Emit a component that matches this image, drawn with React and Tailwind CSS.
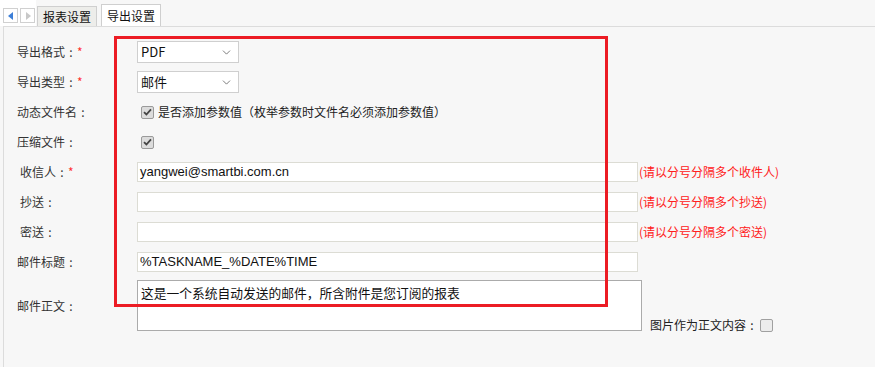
import React from 'react';
import { ChevronDown } from 'lucide-react';

const font = { fontFamily: '"Noto Sans CJK SC", "Liberation Sans", sans-serif' };

const Check = ({ checked }) => (
  <span
    className={`flex h-[13px] w-[13px] items-center justify-center rounded-[2px] border ${
      checked ? 'border-[#9a9a9a] bg-[#dcdcdc]' : 'border-[#a0a0a0] bg-[#ececec]'
    }`}
  >
    {checked && (
      <svg width="9" height="8" viewBox="0 0 9 8">
        <path d="M1 4.2 L3.4 6.5 L8 1.3" fill="none" stroke="#444" strokeWidth="1.8" />
      </svg>
    )}
  </span>
);

const Colon = () => <span className="inline-block w-[12px] text-center">:</span>;

const Label = ({ text, required, indent }) => (
  <div className={`flex w-[120px] shrink-0 items-center text-[12px] text-[#333] ${indent ? 'pl-[3px]' : ''}`}>
    <span>{text}</span>
    <Colon />
    {required && <span className="text-[#f33]">*</span>}
  </div>
);

const Select = ({ value }) => (
  <div className="flex h-[22px] w-[102px] items-center justify-between border border-[#cfcfcf] bg-white pl-[3px] pr-[5px] text-[13px] text-[#111]">
    <span>{value}</span>
    <ChevronDown size={13} strokeWidth={1.4} color="#555" />
  </div>
);

const TextInput = ({ value = '' }) => (
  <div
    className="flex h-[20px] w-[501px] items-center border border-[#dcdcd4] bg-white pl-[2px] text-[13px] text-[#111]"
    style={{ fontFamily: '"Liberation Sans", "Noto Sans CJK SC", sans-serif' }}
  >
    {value}
  </div>
);

const Hint = ({ text }) => (
  <span className="ml-[1px] text-[12px] text-[#ff2020]">{text}</span>
);

export default function App() {
  return (
    <div className="relative h-[367px] w-[875px] overflow-hidden bg-[#f7f7f7]" style={font}>
      {/* tab strip */}
      <div className="flex h-[26px]">
        <div className="flex w-[36px] gap-[2px] bg-white pl-[3px] pt-[8px]">
          <div className="flex h-[15px] w-[15px] items-center justify-center border border-[#d0d0d0] bg-white">
            <svg width="6" height="8" viewBox="0 0 6 8"><path d="M5 0 L0 4 L5 8 Z" fill="#3d7fd8" /></svg>
          </div>
          <div className="flex h-[15px] w-[15px] items-center justify-center border border-[#d0d0d0] bg-white">
            <svg width="6" height="8" viewBox="0 0 6 8"><path d="M1 0 L6 4 L1 8 Z" fill="#c8c8c8" /></svg>
          </div>
        </div>
        <div className="ml-px flex items-end gap-[4px]">
          <div className="flex h-[20px] w-[60px] items-center justify-center border border-b-0 border-[#cfcfcf] bg-[#ededea] text-[12px] text-[#111]">
            报表设置
          </div>
          <div className="flex h-[22px] w-[60px] items-center justify-center border border-b-0 border-[#cfcfcf] bg-white text-[12px] text-[#111]">
            导出设置
          </div>
        </div>
      </div>

      {/* content */}
      <div className="ml-[3px] h-[341px] border-l border-t border-[#dcdcdc] pl-[13px] pt-[10px]">
        <div className="flex h-[30px] items-center">
          <Label text="导出格式" required />
          <Select value="PDF" />
        </div>
        <div className="flex h-[30px] items-center">
          <Label text="导出类型" required />
          <Select value="邮件" />
        </div>
        <div className="flex h-[30px] items-center">
          <Label text="动态文件名" />
          <div className="flex items-center gap-[4px] pl-[4px] text-[12px] text-[#222]">
            <Check checked />
            <span>是否添加参数值（枚举参数时文件名必须添加参数值）</span>
          </div>
        </div>
        <div className="flex h-[30px] items-center">
          <Label text="压缩文件" />
          <div className="pl-[4px]">
            <Check checked />
          </div>
        </div>
        <div className="flex h-[30px] items-center">
          <Label text="收信人" required indent />
          <TextInput value="yangwei@smartbi.com.cn" />
          <Hint text="(请以分号分隔多个收件人)" />
        </div>
        <div className="flex h-[30px] items-center">
          <Label text="抄送" indent />
          <TextInput />
          <Hint text="(请以分号分隔多个抄送)" />
        </div>
        <div className="flex h-[30px] items-center">
          <Label text="密送" indent />
          <TextInput />
          <Hint text="(请以分号分隔多个密送)" />
        </div>
        <div className="flex h-[30px] items-center">
          <Label text="邮件标题" />
          <TextInput value="%TASKNAME_%DATE%TIME" />
        </div>
        <div className="mt-[3px] flex items-center">
          <Label text="邮件正文" />
          <div className="h-[51px] w-[505px] border border-[#ababab] bg-white px-[3px] pt-[2px] text-[12.75px] leading-[20px] text-[#111]">
            这是一个系统自动发送的邮件，所含附件是您订阅的报表
          </div>
          <div className="-mb-[3px] ml-[8px] flex items-center self-end text-[12px] text-[#222]">
            <span>图片作为正文内容</span>
            <Colon />
            <span className="ml-[2px]">
              <Check />
            </span>
          </div>
        </div>
      </div>

      {/* annotation frame */}
      <div className="pointer-events-none absolute left-[114px] top-[36px] h-[271px] w-[494px] border-[3px] border-[#ec1c24]" />
    </div>
  );
}
